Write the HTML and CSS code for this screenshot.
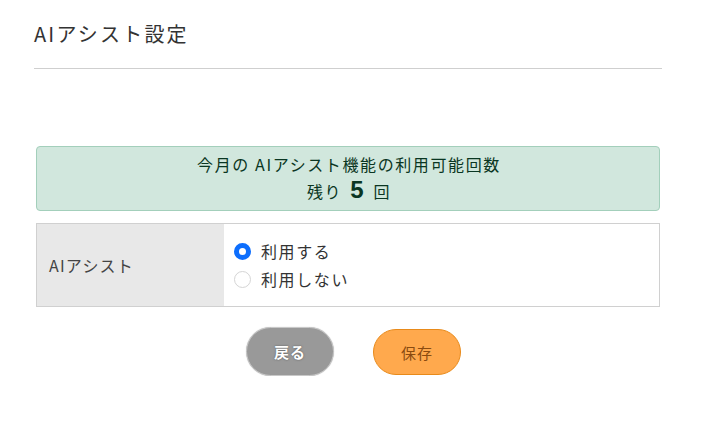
FILE: index.html
```html
<!DOCTYPE html>
<html lang="ja">
<head>
<meta charset="utf-8">
<link rel="stylesheet" href="styles.css">
</head>
<body>
<div class="page">
  <h1 class="title">AIアシスト設定</h1>
  <div class="content">
    <div class="alert">
      <div class="line1">今月の AIアシスト機能の利用可能回数</div>
      <div class="remain">残り <span class="num">5</span> 回</div>
    </div>
    <div class="table">
      <div class="label">AIアシスト</div>
      <div class="value">
        <label class="radio"><span class="dot checked"></span>利用する</label>
        <label class="radio"><span class="dot"></span>利用しない</label>
      </div>
    </div>
    <div class="buttons">
      <button class="btn back">戻る</button>
      <button class="btn save">保存</button>
    </div>
  </div>
</div>
</body>
</html>
```
FILE: styles.css
```css
* { box-sizing: border-box; }
html, body { margin: 0; padding: 0; background: #fff; }
body {
  font-family: "Noto Sans CJK JP", "Noto Sans", sans-serif;
  color: #333;
}
.page {
  width: 628px;
  margin-left: 34px;
  padding-top: 19px;
}
.title {
  margin: 0;
  font-size: 20px;
  font-weight: 400;
  line-height: 30px;
  letter-spacing: 2.2px;
  padding-bottom: 19px;
  border-bottom: 1px solid #cfcfcf;
}
.content {
  padding: 77px 2px 0;
}
.alert {
  background: #d1e7dd;
  border: 1px solid #a3cfbb;
  border-radius: 4px;
  color: #0a3622;
  text-align: center;
  font-size: 16px;
  line-height: 23px;
  letter-spacing: 1.6px;
  padding: 6px 0 0;
  height: 65px;
}
.line1 { padding-left: 2px; }
.remain { line-height: 30px; padding-left: 2px; }
.num {
  font-family: "Liberation Sans", Arial, sans-serif;
  font-size: 24px;
  font-weight: 700;
  line-height: 20px;
  margin: 0 3px;
}
.table {
  margin-top: 12px;
  display: grid;
  grid-template-columns: 187px 1fr;
  border: 1px solid #d0d0d0;
  height: 84px;
}
.label {
  background: #e8e8e8;
  display: flex;
  align-items: center;
  padding-left: 12px;
  font-size: 16px;
  letter-spacing: 1.2px;
  color: #444;
}
.value {
  display: flex;
  flex-direction: column;
  justify-content: center;
  padding-left: 10px;
  gap: 4px;
}
.radio {
  display: flex;
  align-items: center;
  font-size: 16px;
  line-height: 24px;
  letter-spacing: 1.6px;
  color: #333;
}
.dot {
  width: 17px;
  height: 17px;
  border-radius: 50%;
  border: 1px solid #d5d5d5;
  background: #fff;
  margin-right: 10px;
}
.dot.checked {
  border: 5px solid #0d6efd;
}
.buttons {
  display: flex;
  justify-content: center;
  gap: 39px;
  margin-top: 20px;
  padding-left: 11px;
}
.btn {
  font-family: inherit;
  width: 88px;
  height: 49px;
  border-radius: 25px;
  font-size: 15px;
  letter-spacing: 1px;
  cursor: pointer;
}
.back {
  background: #999;
  border: 1px solid #c8c8c8;
  color: #fff;
  font-weight: 700;
  box-shadow: 0 0 1px #bbb;
  text-shadow: 0 0 2px #555;
}
.save {
  background: #ffa94d;
  border: 1px solid #e88a1a;
  color: #8a4b10;
  height: 46px;
  margin-top: 2px;
}
```
